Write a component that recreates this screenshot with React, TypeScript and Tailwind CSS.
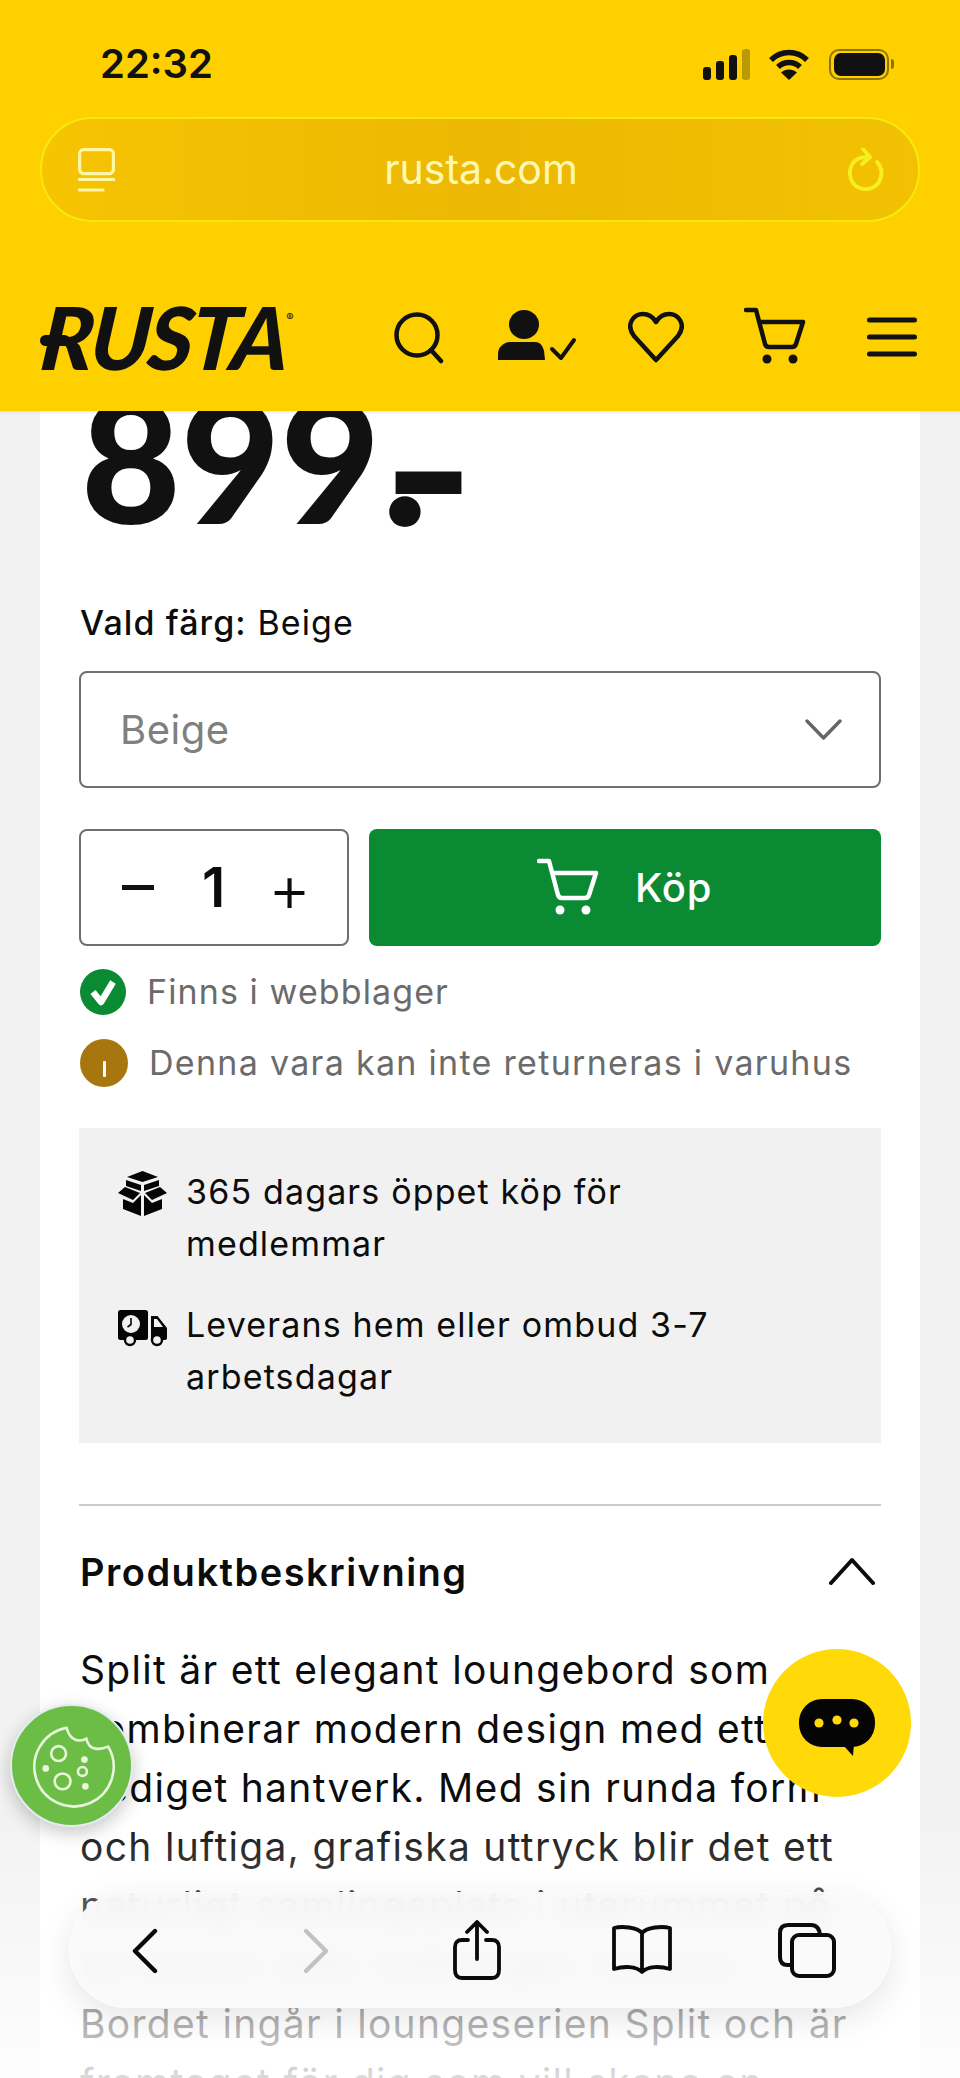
import React from "react";

const body = "font-['Inter','Noto_Sans',sans-serif]";

function Cart({ color }: { color: string }) {
  return (
    <svg viewBox="0 0 62 60" className="h-[60px] w-[62px] shrink-0" fill="none" stroke={color} strokeWidth="4.5" strokeLinecap="round" strokeLinejoin="round">
      <path d="M2 3H12L21 37Q22 40 25 40H48Q51 40 52 37L59 15H15" />
      <circle cx="23" cy="52" r="4.5" fill={color} stroke="none" />
      <circle cx="49" cy="52" r="4.5" fill={color} stroke="none" />
    </svg>
  );
}

function StatusIcons() {
  return (
    <div className="flex items-center">
      <svg viewBox="0 0 47 31" className="h-[31px] w-[47px]" fill="#111">
        <rect x="0" y="18" width="8" height="13" rx="3" />
        <rect x="13" y="12" width="8" height="19" rx="3" />
        <rect x="26" y="6" width="8" height="25" rx="3" />
        <rect x="39" y="0" width="8" height="31" rx="3" fill="#b99a05" />
      </svg>
      <svg viewBox="0 0 42 31" className="ml-[18px] h-[31px] w-[42px]" fill="none" stroke="#111" strokeWidth="5.5">
        <path d="M3 11C13 1 29 1 39 11" />
        <path d="M10 18C16 12 26 12 32 18" />
        <path d="M21 31L13 23.5C17.5 19.5 24.5 19.5 29 23.5Z" fill="#111" stroke="none" />
      </svg>
      <div className="ml-[19px] flex items-center">
        <div className="flex h-[31px] w-[60px] items-center justify-center rounded-[10px] border-2 border-[#8f7400]">
          <div className="h-[23px] w-[51px] rounded-[7px] bg-[#111]" />
        </div>
        <div className="ml-[2px] h-[10px] w-[3px] rounded-r-full bg-[#8f7400]" />
      </div>
    </div>
  );
}

function AddressBar() {
  return (
    <div className="mx-10 mt-[37px] flex h-[105px] items-center justify-between rounded-[52px] border-2 border-[#f8e90c] bg-linear-to-r from-[#f6c402] via-[#ecb803] to-[#f3c102] pl-[36px] pr-[33px]">
      <svg viewBox="0 0 37 44" className="h-[44px] w-[37px]" fill="none" stroke="#fff6a6" strokeWidth="3.2" strokeLinecap="round">
        <rect x="1.6" y="1.6" width="33.8" height="24" rx="4" />
        <path d="M1 31.5H36" />
        <path d="M1 42H25" />
      </svg>
      <span className={`${body} text-[41px] leading-none text-[#fff8b4]`}>rusta.com</span>
      <svg viewBox="0 0 38 44" className="h-[44px] w-[38px]" fill="none" stroke="#f8f01c" strokeWidth="3.8" strokeLinecap="round" strokeLinejoin="round">
        <path d="M30 14C35 19 36 27 32 34C27 42 16 43 9 38C2 32 1 22 6 15C10 10 15 9 20 9" />
        <path d="M16 1L23 9L15 16" />
      </svg>
    </div>
  );
}

function NavRow() {
  const stroke = "#111";
  return (
    <div className="ml-10 mt-[85px] flex h-[60px] items-center">
      <div className="relative flex h-[60px] w-[251px] items-start">
        <span className="absolute left-0 top-[28px] h-[11px] w-[30px] rounded-full bg-[#111]" />
        <span className="ml-[2px] inline-block -skew-x-6 font-['Lato',sans-serif] text-[87px] font-black italic leading-[60px] tracking-[-0.03em] text-[#111]">RUSTA</span>
        <span className="-ml-[1px] font-['Inter',sans-serif] text-[11px] leading-[20px] text-[#111]">®</span>
      </div>
      <svg viewBox="0 0 50 60" className="ml-[103px] h-[60px] w-[50px]" fill="none" stroke={stroke} strokeWidth="4.5" strokeLinecap="round">
        <circle cx="23" cy="28" r="20.5" />
        <path d="M37 43L47 54" />
      </svg>
      <svg viewBox="0 0 80 60" className="ml-[54px] h-[60px] w-[80px]" fill={stroke}>
        <ellipse cx="26" cy="17.5" rx="15" ry="14.5" />
        <path d="M0 53V47C0 40 6 35 13 35H37C43 35 45 40 46 44L47 53Z" />
        <path d="M54 42L63 51L76 33" fill="none" stroke={stroke} strokeWidth="4" strokeLinecap="round" strokeLinejoin="round" />
      </svg>
      <svg viewBox="0 0 56 60" className="ml-[50px] h-[60px] w-[56px]" fill="none" stroke={stroke} strokeWidth="4.5" strokeLinejoin="round">
        <path d="M28 53L6 29C-3 17 6 7 15 7C21 7 25 10 28 15C31 10 35 7 41 7C50 7 59 17 50 29Z" />
      </svg>
      <div className="ml-[60px]">
        <Cart color={stroke} />
      </div>
      <svg viewBox="0 0 50 60" className="ml-[61px] h-[60px] w-[50px]" fill="none" stroke={stroke} strokeWidth="5" strokeLinecap="round">
        <path d="M2.5 13H47.5M2.5 30H47.5M2.5 47H47.5" />
      </svg>
    </div>
  );
}

function Price() {
  return (
    <div className="flex h-[128px] items-start overflow-hidden font-['Lato',sans-serif] font-black text-[#111]">
      <span className="pl-[2px] text-[172px] leading-[94px]">899</span>
      <div className="ml-[2px] flex h-[128px] w-[76px] flex-col text-[172px] leading-none">
        <span className="-mt-[37px] h-[80px] origin-left scale-x-[1.45] scale-y-[1.15]">-</span>
        <span className="-mt-[88px] origin-left scale-[1.12]">.</span>
      </div>
    </div>
  );
}

function BoxIcon() {
  return (
    <svg viewBox="0 0 49 45" className="mt-[5px] h-[45px] w-[49px] shrink-0" fill="#050505">
      <polygon points="24.5,0 40,6 24.5,11 9,6" />
      <polygon points="8,9 23,14 23,20 8,15" />
      <polygon points="41,9 26,14 26,20 41,15" />
      <polygon points="0,22 7,16 22,22 15,29" />
      <polygon points="49,22 42,16 27,22 34,29" />
      <polygon points="5,28 15,32 23,24 23,45 5,38" />
      <polygon points="44,28 34,32 26,24 26,45 44,38" />
    </svg>
  );
}

function TruckIcon() {
  return (
    <svg viewBox="0 0 49 37" className="mt-[11px] h-[37px] w-[49px] shrink-0">
      <rect x="0" y="0" width="30" height="30" rx="2.5" fill="#050505" />
      <circle cx="13" cy="14" r="9" fill="#f1f1f1" />
      <path d="M13 8V14.5L9.5 17" fill="none" stroke="#050505" strokeWidth="1.6" />
      <path d="M33 6H39.5L49 18V28Q49 30 47 30H33Z" fill="#050505" />
      <path d="M36 9H39L45 17H36Z" fill="#f1f1f1" />
      <circle cx="12" cy="30" r="5" fill="#f1f1f1" stroke="#050505" strokeWidth="2.4" />
      <circle cx="39" cy="30" r="5" fill="#f1f1f1" stroke="#050505" strokeWidth="2.4" />
    </svg>
  );
}

function Cookie() {
  return (
    <div className="absolute left-[10px] top-[1704px] h-[123px] w-[123px] rounded-full border-2 border-[#e3edf0] bg-[#6cbd45] shadow-[0_6px_18px_rgba(0,0,0,0.22)]">
      <svg viewBox="0 0 120 120" className="h-full w-full" fill="none" stroke="#e8f6dc" strokeWidth="2.6">
        <path d="M55 22Q58 32 64 34Q70 36 75 33Q77 42 84 43Q90 44 97 41A40 40 0 1 1 55 22Z" />
        <circle cx="47" cy="48" r="7.5" />
        <circle cx="51" cy="76" r="8" />
        <circle cx="71" cy="66" r="4.5" />
        <g fill="#e8f6dc" stroke="none">
          <circle cx="73" cy="54" r="3.4" />
          <circle cx="34" cy="63" r="3.4" />
          <circle cx="74" cy="81" r="3.4" />
        </g>
      </svg>
    </div>
  );
}

function Chat() {
  return (
    <div className="absolute left-[763px] top-[1649px] flex h-[148px] w-[148px] items-center justify-center rounded-full bg-[#ffd908]">
      <svg viewBox="0 0 76 57" className="mt-[8px] h-[57px] w-[76px]">
        <rect x="0" y="0" width="76" height="48" rx="23" fill="#050505" />
        <path d="M44 46L54 57L55 44Z" fill="#050505" />
        <circle cx="20" cy="24" r="4.6" fill="#ffd908" />
        <circle cx="38" cy="21" r="4.6" fill="#ffd908" />
        <circle cx="55" cy="24" r="4.6" fill="#ffd908" />
      </svg>
    </div>
  );
}

function BottomBar() {
  const s = "#0a0a0a";
  return (
    <div className="absolute left-[69px] top-[1892px] flex h-[116px] w-[822px] items-center rounded-[58px] border border-white/60 bg-[#fafafa]/90 shadow-[0_10px_34px_rgba(0,0,0,0.1)] backdrop-blur-md">
      <svg viewBox="0 0 26 46" className="ml-[62px] mt-[2px] h-[46px] w-[26px]" fill="none" stroke={s} strokeWidth="4.4" strokeLinecap="round" strokeLinejoin="round">
        <path d="M23 3L3 23L23 43" />
      </svg>
      <svg viewBox="0 0 26 46" className="ml-[145px] mt-[2px] h-[46px] w-[26px]" fill="none" stroke="#c2c2c2" strokeWidth="4.4" strokeLinecap="round" strokeLinejoin="round">
        <path d="M3 3L23 23L3 43" />
      </svg>
      <svg viewBox="0 0 48 60" className="ml-[124px] h-[60px] w-[48px]" fill="none" stroke={s} strokeWidth="3.8" strokeLinecap="round" strokeLinejoin="round">
        <path d="M24 39V3M14 12L24 2L34 12" />
        <path d="M15 20H9Q2 20 2 27V50Q2 58 9 58H39Q46 58 46 50V27Q46 20 39 20H33" />
      </svg>
      <svg viewBox="0 0 60 50" className="ml-[111px] h-[50px] w-[60px]" fill="none" stroke={s} strokeWidth="3.8" strokeLinejoin="round">
        <path d="M30 8C25 2 10 1 2 3V44C12 41 24 41 30 47C36 41 48 41 58 44V3C50 1 35 2 30 8ZM30 8V47" />
      </svg>
      <svg viewBox="0 0 58 55" className="ml-[106px] h-[55px] w-[58px]" fill="none" stroke={s} strokeWidth="4" strokeLinejoin="round">
        <path d="M12 42H10Q2 42 2 34V10Q2 2 10 2H33Q41 2 42 12" />
        <rect x="14" y="12" width="42" height="41" rx="7" />
      </svg>
    </div>
  );
}

export default function App() {
  return (
    <div className={`${body} relative h-[2078px] w-[960px] overflow-hidden bg-[#f2f2f2] text-[#0c0c0c]`}>
      <header className="relative z-10 h-[411px] bg-[#ffd000] pt-[48px] shadow-[0_1px_3px_rgba(0,0,0,0.12)]">
        <div className="flex h-[32px] items-center justify-between pl-[100px] pr-[66px]">
          <span className={`${body} text-[40px] font-semibold leading-[32px] text-[#111]`}>22:32</span>
          <StatusIcons />
        </div>
        <AddressBar />
        <NavRow />
      </header>

      <main className="mx-10 h-[1667px] overflow-hidden bg-white px-[39px]">
        <Price />
        <p className="mt-[62px] pl-px text-[34px] leading-[44px] tracking-[1.1px]">
          <span className="font-medium">Vald färg:</span> Beige
        </p>
        <div className="mt-[26px] flex h-[117px] items-center justify-between rounded-lg border-2 border-[#6f6f6f] pl-[39px] pr-[37px]">
          <span className="text-[40px] tracking-[0.5px] text-[#808080]">Beige</span>
          <svg viewBox="0 0 37 21" className="h-[21px] w-[37px]" fill="none" stroke="#666" strokeWidth="3.4" strokeLinecap="round" strokeLinejoin="round">
            <path d="M2 2L18.5 19L35 2" />
          </svg>
        </div>

        <div className="mt-[41px] flex h-[117px] gap-[20px]">
          <div className="flex w-[270px] items-center rounded-lg border-2 border-[#6f6f6f] text-[#0c0c0c]">
            <span className="ml-[41px] h-[5px] w-[32px] bg-[#111]" />
            <span className="ml-[48px] w-[16px] text-center text-[55px] font-semibold leading-none">1</span>
            <span className="ml-[50px] text-[66px] font-light leading-none">+</span>
          </div>
          <button className="flex flex-1 items-center rounded-lg bg-[#0a8a33] pl-[168px] text-white">
            <Cart color="#ffffff" />
            <span className="ml-[36px] text-[40px] font-medium leading-none tracking-[0.8px]">Köp</span>
          </button>
        </div>

        <div className="mt-[23px] flex h-[46px] items-center pl-px">
          <svg viewBox="0 0 46 46" className="h-[46px] w-[46px]">
            <circle cx="23" cy="23" r="23" fill="#0a8a33" />
            <path d="M13 23L21 33L33 13" fill="none" stroke="#fff" strokeWidth="6.5" strokeLinejoin="round" />
          </svg>
          <span className="ml-[21px] text-[34px] leading-none tracking-[1.1px] text-[#6b6b6b]">Finns i webblager</span>
        </div>
        <div className="mt-[24px] flex h-[48px] items-center pl-px">
          <svg viewBox="0 0 48 48" className="h-[48px] w-[48px]">
            <circle cx="24" cy="24" r="24" fill="#a8760f" />
            <rect x="23" y="22" width="3" height="16" rx="1" fill="#fff" />
          </svg>
          <span className="ml-[21px] text-[34px] leading-none tracking-[1.3px] text-[#6b6b6b]">Denna vara kan inte returneras i varuhus</span>
        </div>

        <section className="mt-[41px] flex h-[315px] flex-col gap-[29px] bg-[#f1f1f1] px-[39px] py-[38px] text-[34px] leading-[52px] tracking-[1.15px]">
          <div className="flex gap-[19px]">
            <BoxIcon />
            <p>365 dagars öppet köp för<br />medlemmar</p>
          </div>
          <div className="flex gap-[19px]">
            <TruckIcon />
            <p>Leverans hem eller ombud 3-7<br />arbetsdagar</p>
          </div>
        </section>

        <hr className="mt-[61px] border-0 border-t-2 border-[#cccccc]" />
        <div className="mt-[40px] flex h-[52px] items-center justify-between">
          <h2 className="pl-px text-[38px] font-semibold leading-[52px] tracking-[1.5px]">Produktbeskrivning</h2>
          <svg viewBox="0 0 46 28" className="mb-[2px] mr-[6px] h-[28px] w-[46px]" fill="none" stroke="#0c0c0c" strokeWidth="4" strokeLinecap="round" strokeLinejoin="round">
            <path d="M2 26L23 3L44 26" />
          </svg>
        </div>
        <p className="mt-[42px] whitespace-nowrap pl-px text-[39px] leading-[59px] tracking-[1.3px]">
          Split är ett elegant loungebord som<br />
          kombinerar modern design med ett<br />
          gediget hantverk. Med sin runda form<br />
          och luftiga, grafiska uttryck blir det ett<br />
          naturligt samlingsplats i uterummet på<br />
          terrassen eller balkongen hemma.<br />
          Bordet ingår i loungeserien Split och är<br />
          framtaget för dig som vill skapa en
        </p>
      </main>

      <div className="absolute inset-x-0 bottom-0 h-[270px] bg-linear-to-b from-white/0 to-white/85" />
      <Cookie />
      <Chat />
      <BottomBar />
    </div>
  );
}
